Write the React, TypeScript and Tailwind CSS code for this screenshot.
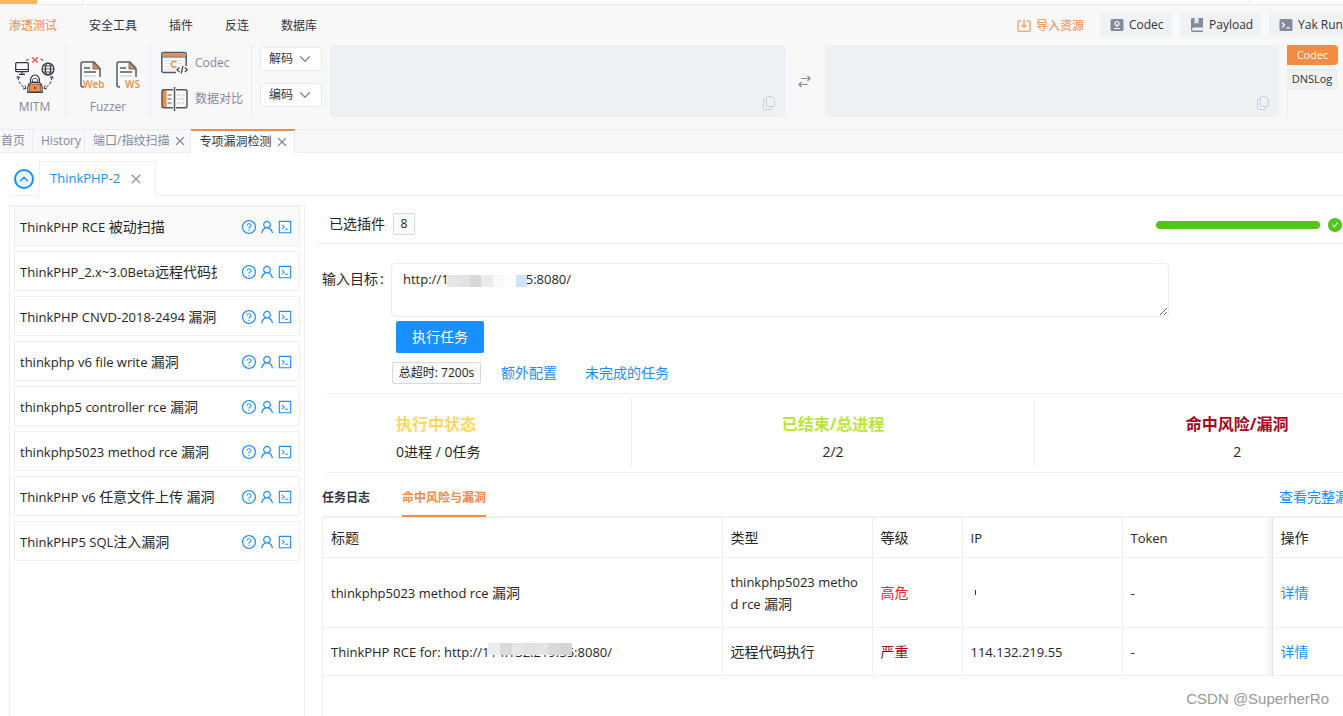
import { useState } from "react";
import { ChevronDown, ChevronUp, X } from "lucide-react";
import { AiOutlineCode, AiOutlineQuestionCircle, AiOutlineUser, AiFillCheckCircle } from "react-icons/ai";

const menus = ["渗透测试", "安全工具", "插件", "反连", "数据库"];

const plugins = [
  "ThinkPHP RCE 被动扫描",
  "ThinkPHP_2.x~3.0Beta远程代码执行漏洞",
  "ThinkPHP CNVD-2018-2494 漏洞",
  "thinkphp v6 file write 漏洞",
  "thinkphp5 controller rce 漏洞",
  "thinkphp5023 method rce 漏洞",
  "ThinkPHP v6 任意文件上传 漏洞",
  "ThinkPHP5 SQL注入漏洞",
];

const fixedColumn =
  "relative before:absolute before:inset-y-0 before:-left-2 before:w-2 before:bg-linear-to-l before:from-black/6 before:to-transparent";

function MitmIcon() {
  return (
    <svg width="40" height="38" viewBox="0 0 40 38" fill="none" stroke="#31343f" strokeWidth="1.2">
      <rect x="0.7" y="6.7" width="12.6" height="9" rx="1" />
      <path d="M1 13.5h12M7 16v2M4 18.3h6" />
      <circle cx="33" cy="13" r="6" />
      <ellipse cx="33" cy="13" rx="2.6" ry="6" />
      <path d="M27 13h12M28 10h10M28 16h10" strokeWidth="0.8" />
      <path d="M11 4.5l3-1.5M25.5 3l3 1.5M3 21c.5 5 3 9 7 11M37 21c-.5 5-3 9-7 11" strokeWidth="1" strokeDasharray="3 1.5" />
      <path d="M1.8 22.5l1.4-2.5 2 2M34.8 22l2-2 1.4 2.5M8 33l3-.5-1-3M32 33l-3-.5 1-3" strokeWidth="1" />
      <path d="M17.2 1.2l5.6 5.2M22.8 1.2l-5.6 5.2" stroke="#f6544a" strokeWidth="1.4" />
      <path d="M15.5 26c-.5-4 1.5-7 4.5-7s5 3 4.5 7M13 36c-.8-5 .5-8.5 3-9.5h8c2.5 1 3.8 4.5 3 9.5" />
      <path d="M17.5 23.5c1-1.5 4-1.5 5 0v2.5h-5z" strokeWidth="0.8" />
      <rect x="14.5" y="28" width="11" height="8" rx="1" fill="#f28b44" strokeWidth="0.6" />
      <circle cx="20" cy="32" r="1" fill="#31343f" stroke="none" />
      <path d="M12 36.3h16" />
    </svg>
  );
}

function FileIcon({ label }: { label: string }) {
  return (
    <svg width="24" height="28" viewBox="0 0 24 28" fill="none" overflow="visible">
      <path d="M20 16V7.5L14 1H3a2 2 0 0 0-2 2v21a2 2 0 0 0 2 2h1" stroke="#56595f" strokeWidth="1.5" />
      <path d="M13 1.5v6.5h6.5z" fill="#f28b44" stroke="#56595f" strokeWidth="0.8" />
      <path d="M4 7h6M4 11h12" stroke="#56595f" strokeWidth="1.3" />
      <path d="M4 15h12" stroke="#d3d8e2" strokeWidth="1.6" />
      <text x={label === "WS" ? 9 : 3} y="26.5" fontSize="10" fontWeight="600" fontFamily="Open Sans" fill="#f28b44">
        {label}
      </text>
    </svg>
  );
}

function CodecIcon() {
  return (
    <svg width="27" height="24" viewBox="0 0 27 24" fill="none">
      <rect x="0.8" y="1.5" width="24.4" height="20" rx="2" stroke="#56595f" strokeWidth="1.5" />
      <rect x="1.5" y="2" width="23" height="3.5" fill="#f28b44" />
      <path d="M1 6h24" stroke="#56595f" />
      <path d="M4 9.5h18M4 12.5h18M4 15.5h12M4 18.5h12" stroke="#d3d8e2" strokeDasharray="2 1.5" />
      <rect x="15" y="15" width="12" height="9" fill="#f8f8f8" />
      <rect x="9" y="9.5" width="7" height="7.5" fill="#f8f8f8" />
      <path d="M15.5 11.2a3 3 0 1 0 0 4" stroke="#f28b44" strokeWidth="1.5" />
      <path d="M18.5 16.5l-2.5 2.3 2.5 2.3M23.8 16.5l2.5 2.3-2.5 2.3M22 15l-1.800 7.5" stroke="#31343f" strokeWidth="1.1" />
    </svg>
  );
}

function CompareIcon() {
  return (
    <svg width="27" height="24" viewBox="0 0 27 24" fill="none" stroke="#56595f" strokeWidth="1.5">
      <rect x="1" y="3" width="4.5" height="17.5" fill="#f28b44" stroke="none" />
      <path d="M12 2.8H2.5a1.5 1.5 0 0 0-1.5 1.5v15a1.5 1.5 0 0 0 1.5 1.5H12M15 2.8h9.5a1.5 1.5 0 0 1 1.5 1.5v15a1.5 1.5 0 0 1-1.5 1.5H15" />
      <path d="M13.500 0v24" />
      <path d="M6.5 8h4M6.5 12h4M6.5 16h4" strokeWidth="1.2" />
      <path d="M16 8h3M20.5 8h3M16 12h7M16 16h3M20.5 16h3" stroke="#d3d8e2" />
    </svg>
  );
}

function CopyIcon() {
  return (
    <svg width="12" height="14" viewBox="0 0 12 14" fill="none" stroke="#c8cddb">
      <path d="M3.5 1.5a1 1 0 0 1 1-1h4l3 3v6a1 1 0 0 1-1 1h-6a1 1 0 0 1-1-1z" />
      <path d="M3.5 3h-2a1 1 0 0 0-1 1v8.5a1 1 0 0 0 1 1h6a1 1 0 0 0 1-1v-2" />
    </svg>
  );
}

function SwapIcon() {
  return (
    <svg width="13" height="13" viewBox="0 0 13 13" fill="none" stroke="#85899e" strokeWidth="1.2">
      <path d="M3.5 3.5H12M9.5 1L12 3.5 9.5 6M9.5 9.5H1M3.5 7L1 9.5 3.5 12" />
    </svg>
  );
}

function ImportIcon() {
  return (
    <svg width="14" height="14" viewBox="0 0 14 14" fill="none" stroke="#f4a470" strokeWidth="1.4">
      <path d="M4.5 2H2.2A1.2 1.2 0 0 0 1 3.2v8a1.2 1.2 0 0 0 1.2 1.2h9.6a1.2 1.2 0 0 0 1.2-1.2v-8A1.2 1.2 0 0 0 11.8 2H9.5" />
      <path d="M7 0.5V8M4.5 5.8L7 8.3l2.5-2.5" />
    </svg>
  );
}

function ShortcutIcon({ kind }: { kind: string }) {
  if (kind === "Payload") {
    return (
      <svg width="14" height="14" viewBox="0 0 14 14">
        <path d="M2 0h11v9.5H3.5a1 1 0 0 0 0 3H13V14H3a2 2 0 0 1-2-2V1a1 1 0 0 1 1-1z" fill="#85899e" />
        <path d="M4.5 0v6l2-1.5 2 1.5V0z" fill="#e7e9ef" />
      </svg>
    );
  }
  return (
    <svg width="14" height="14" viewBox="0 0 14 14" fill="none" stroke="#fff" strokeWidth="1.2">
      <rect x="0.5" y="1" width="13" height="12" rx="1.5" fill="#85899e" stroke="none" />
      {kind === "Codec" ? (
        <>
          <circle cx="7" cy="5.5" r="2" />
          <path d="M4 10.5h6M7 7.5v1.5" />
        </>
      ) : (
        <path d="M3 4.5L5.5 7 3 9.5M7 10h4" />
      )}
    </svg>
  );
}

function Shortcut({ name, className }: { name: string; className: string }) {
  return (
    <button className={`flex h-6 items-center gap-[5px] whitespace-nowrap rounded bg-[#f0f1f3] pl-2.5 text-[#31343f] ${className}`}>
      <ShortcutIcon kind={name} />
      <span className="font-medium">{name}</span>
    </button>
  );
}

function DropButton({ name }: { name: string }) {
  return (
    <button className="flex h-6 w-[62px] items-center gap-[3px] rounded border border-[#eaecf3] bg-white pl-2 text-[#31343f]">
      {name}
      <ChevronDown size={18} strokeWidth={1.8} color="#85899e" />
    </button>
  );
}

function CodecBox({ label }: { label: string }) {
  return (
    <div className="relative h-[72px] min-w-0 flex-1">
      <textarea
        aria-label={label}
        className="block h-full w-full resize-none rounded border border-[#eaecf3] bg-[#f0f1f3] p-2 outline-none"
      />
      <button aria-label="复制" className="absolute right-2.5 bottom-[7px]">
        <CopyIcon />
      </button>
    </div>
  );
}

function PageTab({ name, closable, active }: { name: string; closable?: boolean; active?: boolean }) {
  return (
    <div
      className={
        active
          ? "flex items-center gap-1 border-t-2 border-r border-t-[#f28b44] border-r-[#eaecf3] bg-white pr-[5px] pl-2 text-[#31343f]"
          : "flex items-center gap-1 border-t border-r border-b border-[#eaecf3] pr-[3px] pl-2 text-[#85899e] first:pr-[7px] first:pl-px"
      }
    >
      <button className="whitespace-nowrap">{name}</button>
      {closable && (
        <button aria-label="关闭">
          <X size={14} strokeWidth={2.2} color="#85899e" />
        </button>
      )}
    </div>
  );
}

// latin runs keep the parent's size, chinese runs are one step larger
function Mixed({ text }: { text: string }) {
  return text.split(/([\u4e00-\u9fff]+)/).map((part, i) =>
    i % 2 ? (
      <span key={i} className="text-sm">
        {part}
      </span>
    ) : (
      part
    ),
  );
}

// blurred part of an address
function Mask({ colors }: { colors: string[] }) {
  return (
    <span className="flex h-3">
      {colors.map((c, i) => (
        <span key={i} className="h-full flex-1" style={{ backgroundColor: c }} />
      ))}
    </span>
  );
}

export default function App() {
  const [target, setTarget] = useState("http://114.132.219.55:8080/");
  const [selected, setSelected] = useState(0);

  return (
    <div className="relative flex min-h-screen flex-col overflow-hidden bg-white font-['Open_Sans','Noto_Sans_CJK_SC',sans-serif] text-xs text-[#262626]">
      <div className="flex h-[5px] border-b border-[#eaecf3]">
        <div className="w-[37px] bg-[#ffb660]" />
        <div className="w-[46px] border-r border-[#eaecf3]" />
        <div className="mr-[93px] flex-1 border-r border-[#eaecf3]" />
      </div>

      <header className="bg-[#f8f8f8]">
        <div className="flex h-10 items-center justify-between pl-[9px]">
          <nav className="flex gap-8 pt-0.5">
            {menus.map((m, i) => (
              <button key={m} className={i === 0 ? "text-[#f28b44]" : "text-[#31343f]"}>
                {m}
              </button>
            ))}
          </nav>
          <div className="-mr-6 flex shrink-0 items-center gap-2">
            <button className="mr-2 flex items-center gap-[5px] pt-0.5 text-[#f28b44]">
              <ImportIcon />
              导入资源
            </button>
            <Shortcut name="Codec" className="w-[72px]" />
            <Shortcut name="Payload" className="w-[81px]" />
            <Shortcut name="Yak Runner" className="w-[98px]" />
          </div>
        </div>

        <div className="flex h-[84px] items-start text-[#85899e]">
          <button className="flex h-[72px] w-[66px] flex-col items-center justify-end gap-[3px] border-r border-[#eaecf3] pl-1">
            <MitmIcon />
            <span className="leading-5">MITM</span>
          </button>
          <div className="flex h-[72px] w-[85px] flex-col items-center justify-end gap-2 border-r border-[#eaecf3]">
            <div className="flex gap-3 pl-1">
              <button aria-label="Web Fuzzer">
                <FileIcon label="Web" />
              </button>
              <button aria-label="WS Fuzzer">
                <FileIcon label="WS" />
              </button>
            </div>
            <span className="leading-5">Fuzzer</span>
          </div>
          <div className="flex h-[72px] w-[101px] flex-col justify-center gap-3 border-r border-[#eaecf3] pl-2.5">
            <button className="flex items-center gap-[7px]">
              <CodecIcon />
              Codec
            </button>
            <button className="flex items-center gap-[7px]">
              <CompareIcon />
              数据对比
            </button>
          </div>
          <div className="flex flex-col gap-3 px-2 pt-0.5">
            <DropButton name="解码" />
            <DropButton name="编码" />
          </div>
          <CodecBox label="输入" />
          <button aria-label="交换" className="flex h-[72px] w-10 items-center justify-center">
            <SwapIcon />
          </button>
          <CodecBox label="输出" />
          <div className="ml-2 flex h-[72px] w-14 flex-col items-start gap-1 border-l border-[#eaecf3]">
            <button className="-ml-px h-5 w-[51px] rounded-r bg-[#f28b44] text-[11px] text-white">Codec</button>
            <button className="-ml-px h-5 w-[51px] rounded-r border border-l-0 border-[#eaecf3] bg-[#f0f1f3] text-[11px] text-[#31343f]">
              DNSLog
            </button>
          </div>
        </div>

        <div className="flex h-6">
          <PageTab name="首页" />
          <PageTab name="History" />
          <PageTab name="端口/指纹扫描" closable />
          <PageTab name="专项漏洞检测" closable active />
          <div className="flex-1 border-y border-[#eaecf3]" />
        </div>
      </header>

      <div className="flex h-[43px] items-stretch pt-2 pl-[9px]">
        <div className="flex w-[30px] items-center justify-center border-b border-[#f0f0f0] pt-0.5">
          <button
            aria-label="收起"
            className="flex size-5 items-center justify-center rounded-full border-2 border-[#1890ff] bg-[#e6f7ff]"
          >
            <ChevronUp size={14} strokeWidth={2.4} color="#1890ff" />
          </button>
        </div>
        <div className="flex w-[117px] items-center gap-2 border border-b-0 border-[#f0f0f0] pl-2.5">
          <button className="text-[13px] text-[#1890ff]">ThinkPHP-2</button>
          <button aria-label="关闭">
            <X size={16} strokeWidth={1.6} color="#8c8c8c" />
          </button>
        </div>
        <div className="flex-1 border-b border-[#f0f0f0]" />
      </div>

      <main className="flex flex-1">
        <aside className="mt-[9px] ml-[9px] w-[296px] shrink-0 border border-b-0 border-[#f0f0f0] px-1 text-[13px]">
          <ul className="flex flex-col gap-[5px]">
            {plugins.map((p, i) => (
              <li
                key={p}
                className={`flex h-10 items-center justify-between border border-[#f0f0f0] pt-0.5 pr-1.5 pl-[5px] ${i === selected ? "bg-[#fafafa]" : ""}`}
              >
                <button onClick={() => setSelected(i)} className="w-[197px] overflow-hidden text-left whitespace-nowrap">
                  <Mixed text={p} />
                </button>
                <span className="flex gap-0.5 text-[#1890ff]">
                  <AiOutlineQuestionCircle size={16} />
                  <AiOutlineUser size={16} />
                  <AiOutlineCode size={16} />
                </span>
              </li>
            ))}
          </ul>
        </aside>

        <section className="ml-3 flex min-w-0 flex-1 flex-col text-sm">
          <div className="flex h-12 items-center border-b border-[#f0f0f0] pt-2 pl-3">
            已选插件
            <span className="ml-2 flex h-[22px] w-[22px] items-center justify-center rounded-xs border border-[#d9d9d9] bg-[#fafafa] text-xs">
              8
            </span>
            <div className="ml-auto flex items-center gap-[7px] pt-0.5">
              <div role="progressbar" aria-label="进度" aria-valuenow={100} className="h-2 w-[164px] rounded-full bg-[#52c41a]" />
              <AiFillCheckCircle size={16} color="#52c41a" />
            </div>
          </div>

          <form className="flex items-start pt-[19px] pl-[5px]" onSubmit={(e) => e.preventDefault()}>
            <label htmlFor="target" className="w-[69px] shrink-0 leading-8">
              输入目标<span className="ml-0.5">:</span>
            </label>
            <div>
              <div className="relative w-[778px]">
                <textarea
                  id="target"
                  value={target}
                  onChange={(e) => setTarget(e.target.value)}
                  className="block h-[54px] w-full resize rounded border border-[#eaecf3] px-[11px] py-1 text-[13px] leading-[22px] outline-none"
                />
                <div className="pointer-events-none absolute top-3 left-14 w-20">
                  <Mask colors={["#e6e6e6", "#e2e2e4", "#d8d8d8", "#ececec", "#f9f9f9", "#fdfdff", "#cfe2ff"]} />
                </div>
              </div>
              <button className="mt-1 ml-[5px] block h-8 w-[88px] rounded-xs bg-[#1890ff] text-white shadow-xs">执行任务</button>
              <div className="mt-[9px] flex h-[22px] items-center">
                <span className="ml-px flex h-[22px] w-[89px] items-center justify-center rounded-xs border border-[#d9d9d9] bg-[#fafafa] text-xs">
                  总超时: 7200s
                </span>
                <a href="#config" className="ml-5 text-[#1890ff]">
                  额外配置
                </a>
                <a href="#pending" className="ml-7 text-[#1890ff]">
                  未完成的任务
                </a>
              </div>
            </div>
          </form>

          <div className="mt-[9px] -mr-24 ml-[9px] grid h-20 grid-cols-[306fr_404fr_404fr] border-y border-[#f0f0f0] py-1 leading-[22px]">
            <div className="border-r border-[#f0f0f0] pt-3.5 pl-[70px]">
              <div className="mb-[5px] text-base leading-6 font-bold text-[#ffd666]">执行中状态</div>
              <div>0进程 / 0任务</div>
            </div>
            <div className="border-r border-[#f0f0f0] pt-3.5 text-center">
              <div className="mb-[5px] text-base leading-6 font-bold text-[#bae637]">已结束/总进程</div>
              <div>2/2</div>
            </div>
            <div className="pt-3.5 text-center">
              <div className="mb-[5px] text-base leading-6 font-bold text-[#a8071a]">命中风险/漏洞</div>
              <div>2</div>
            </div>
          </div>

          <div className="ml-[5px] flex h-11 items-stretch gap-8 border-b border-[#f0f0f0] text-xs font-bold">
            <button className="pt-1.5 text-[#31343f]">任务日志</button>
            <button className="-mb-px border-b-2 border-[#f28b44] pt-2 text-[#f28b44]">命中风险与漏洞</button>
            <a
              href="#report"
              className="-mr-5 ml-auto flex w-[84px] items-center pt-1 text-sm font-normal whitespace-nowrap text-[#1890ff]"
            >
              查看完整漏洞
            </a>
          </div>

          <div className="ml-[5px] flex-1 border-l border-[#f0f0f0]">
            <table className="w-full table-fixed border-collapse text-left text-[13px] leading-[22px]">
              <colgroup>
                <col />
                <col className="w-[150px]" />
                <col className="w-[90px]" />
                <col className="w-[160px]" />
                <col className="w-[150px]" />
                <col className="w-[71px]" />
              </colgroup>
              <thead>
                <tr className="h-10 border-y border-[#f0f0f0] *:border-r *:border-[#f0f0f0] *:px-2 *:font-normal *:last:border-r-0">
                  <th className="text-sm">标题</th>
                  <th className="text-sm">类型</th>
                  <th className="text-sm">等级</th>
                  <th>IP</th>
                  <th>Token</th>
                  <th className={`text-sm ${fixedColumn}`}>操作</th>
                </tr>
              </thead>
              <tbody>
                <tr className="h-[70px] border-b border-[#f0f0f0] *:border-r *:border-[#f0f0f0] *:px-2 *:last:border-r-0">
                  <td>
                    <Mixed text="thinkphp5023 method rce 漏洞" />
                  </td>
                  <td className="break-all">
                    <Mixed text="thinkphp5023 method rce 漏洞" />
                  </td>
                  <td className="text-sm text-[#f5222d]">高危</td>
                  <td>
                    <span className="ml-1 block h-[5px] w-px bg-[#31343f]" />
                  </td>
                  <td>-</td>
                  <td className={fixedColumn}>
                    <a href="#detail-1" className="text-sm text-[#1890ff]">
                      详情
                    </a>
                  </td>
                </tr>
                <tr className="h-12 border-b border-[#f0f0f0] *:border-r *:border-[#f0f0f0] *:px-2 *:last:border-r-0">
                  <td>
                    ThinkPHP RCE for: http://
                    <span className="relative">
                      114.132.219.55
                      <span className="absolute top-0 left-1.5 w-[84px]">
                        <Mask colors={["#ececec", "#dcd9da", "#e6e6e6", "#e2e2e2", "#e4e4e4", "#dadada", "#d4d4d4"]} />
                      </span>
                    </span>
                    :8080/
                  </td>
                  <td className="text-sm">远程代码执行</td>
                  <td className="text-sm text-[#a8071a]">严重</td>
                  <td>114.132.219.55</td>
                  <td>-</td>
                  <td className={fixedColumn}>
                    <a href="#detail-2" className="text-sm text-[#1890ff]">
                      详情
                    </a>
                  </td>
                </tr>
              </tbody>
            </table>
          </div>
        </section>
      </main>

      <div className="absolute right-3.5 bottom-[7px] font-['Liberation_Sans',sans-serif] text-[15px] leading-5 text-[#999999]">
        CSDN @SuperherRo
      </div>
    </div>
  );
}
